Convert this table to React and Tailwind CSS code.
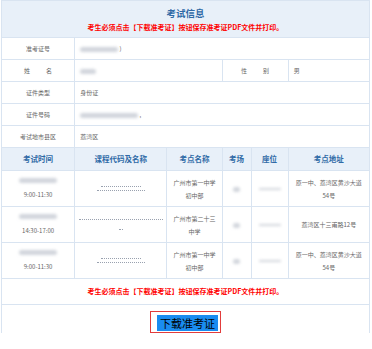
import React from 'react';

const font = { fontFamily: '"Noto Sans CJK SC", "Noto Sans", sans-serif' };

function Blur({ w, h = 6, className = '' }) {
  return (
    <span
      className={`inline-block rounded-full bg-gray-300 blur-[1.5px] align-middle ${className}`}
      style={{ width: w, height: h }}
    />
  );
}

function Dots({ w }) {
  return <span className="block h-0 border-t border-dotted border-gray-400 mx-auto" style={{ width: w }} />;
}

const cell = 'border border-[#d9e4f1] text-[6px] text-[#666] text-center leading-[13px] p-0';

export default function App() {
  const rows = [
    {
      time: '9:00-11:30',
      site: ['广州市第一中学', '初中部'],
      addr: ['原一中、荔湾区黄沙大道', '54号'],
    },
    {
      time: '14:30-17:00',
      site: ['广州市第二十三', '中学'],
      addr: ['荔湾区十三甫路12号'],
      wide: true,
    },
    {
      time: '9:00-11:30',
      site: ['广州市第一中学', '初中部'],
      addr: ['原一中、荔湾区黄沙大道', '54号'],
    },
  ];

  return (
    <div className="w-[372px] h-[349px] bg-white overflow-hidden" style={font}>
      <table className="ml-px w-[369px] table-fixed border-collapse">
        <colgroup>
          <col className="w-[73px]" />
          <col className="w-[92px]" />
          <col className="w-[55px]" />
          <col className="w-[29px]" />
          <col className="w-[37px]" />
          <col className="w-[81px]" />
        </colgroup>
        <tbody>
          <tr className="h-[37px] bg-[#e8f0f9]">
            <td colSpan={6} className="border border-[#d9e4f1] text-center p-0">
              <div className="text-[9.5px] font-bold text-[#2f6aa6] leading-[13px] pb-[2px]">考试信息</div>
              <div className="text-[7px] font-bold text-[#f00] leading-[10px]">
                考生必须点击【下载准考证】按钮保存准考证PDF文件并打印。
              </div>
            </td>
          </tr>
          <tr className="h-[22px]">
            <td className={cell}>准考证号</td>
            <td colSpan={5} className={`${cell} text-left pl-[5px]`}>
              <Blur w={38} h={5} /> <span>)</span>
            </td>
          </tr>
          <tr className="h-[22px]">
            <td className={cell}>姓<span className="inline-block w-[16px]" />名</td>
            <td colSpan={2} className={`${cell} text-left pl-[5px]`}>
              <Blur w={16} h={5} />
            </td>
            <td colSpan={2} className={cell}>性<span className="inline-block w-[16px]" />别</td>
            <td className={`${cell} text-left pl-[5px]`}>男</td>
          </tr>
          <tr className="h-[22px]">
            <td className={cell}>证件类型</td>
            <td colSpan={5} className={`${cell} text-left pl-[5px]`}>身份证</td>
          </tr>
          <tr className="h-[22px]">
            <td className={cell}>证件号码</td>
            <td colSpan={5} className={`${cell} text-left pl-[5px]`}>
              <Blur w={58} h={5} /> <span>,</span>
            </td>
          </tr>
          <tr className="h-[22px]">
            <td className={cell}>考试地市县区</td>
            <td colSpan={5} className={`${cell} text-left pl-[5px]`}>荔湾区</td>
          </tr>
          <tr className="h-[23px] bg-[#e8f0f9]">
            {['考试时间', '课程代码及名称', '考点名称', '考场', '座位', '考点地址'].map((t) => (
              <td key={t} className="border border-[#d9e4f1] text-center text-[7.5px] font-bold text-[#2f6aa6] p-0">
                {t}
              </td>
            ))}
          </tr>
          {rows.map((r, i) => (
            <tr key={i} className="h-[36px]">
              <td className={cell}>
                <div className="leading-[8px]"><Blur w={38} h={5} /></div>
                <div className="mt-[4px]">{r.time}</div>
              </td>
              <td className={cell}>
                {r.wide ? (
                  <div className="flex flex-col items-center gap-[9px]">
                    <Dots w={84} />
                    <Dots w={4} />
                  </div>
                ) : (
                  <div className="flex flex-col items-center gap-[3px]">
                    <Dots w={40} />
                    <Dots w={48} />
                  </div>
                )}
              </td>
              <td className={cell}>
                {r.site.map((s) => (
                  <div key={s}>{s}</div>
                ))}
              </td>
              <td className={cell}>
                <Blur w={7} h={5} className="rounded-sm" />
              </td>
              <td className={cell}>
                <Blur w={22} h={2} />
              </td>
              <td className={cell}>
                {r.addr.map((s) => (
                  <div key={s}>{s}</div>
                ))}
              </td>
            </tr>
          ))}
          <tr className="h-[26px]">
            <td colSpan={6} className="border border-[#d9e4f1] text-center text-[7px] font-bold text-[#f00] p-0">
              考生必须点击【下载准考证】按钮保存准考证PDF文件并打印。
            </td>
          </tr>
          <tr className="h-[27px]">
            <td colSpan={6} className="border-x border-[#d9e4f1] text-center p-0 pt-[4px] align-top">
              <span className="inline-block border border-[#e23c3c] pl-[6px] pr-[2px] pt-[3px] pb-[1px]">
                <button className="block bg-[#1a8cf0] text-black text-[11px] leading-[16px] px-[3px]">
                  下载准考证
                </button>
              </span>
            </td>
          </tr>
        </tbody>
      </table>
    </div>
  );
}
